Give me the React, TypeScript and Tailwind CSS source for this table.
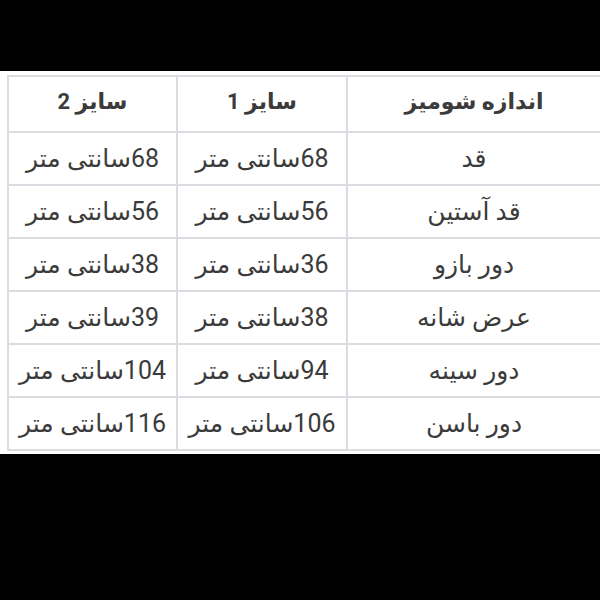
const header = ['اندازه شومیز', 'سایز 1', 'سایز 2'];

const rows = [
  ['قد', '68سانتی متر', '68سانتی متر'],
  ['قد آستین', '56سانتی متر', '56سانتی متر'],
  ['دور بازو', '36سانتی متر', '38سانتی متر'],
  ['عرض شانه', '38سانتی متر', '39سانتی متر'],
  ['دور سینه', '94سانتی متر', '104سانتی متر'],
  ['دور باسن', '106سانتی متر', '116سانتی متر'],
];

export default function App() {
  return (
    <div
      className="w-[600px] h-[600px] bg-black overflow-hidden"
      style={{ fontFamily: "Roboto, 'DejaVu Sans', sans-serif" }}
    >
      <div className="h-[71px]" />
      <div className="bg-white pt-[4px] pb-[3px] pl-[7px]">
        <div dir="rtl" className="grid grid-cols-[254px_170px_169px] border-t-2 border-[#d9dce0] text-[#3b3b3b]">
          {header.map((h) => (
            <div
              key={h}
              className="h-[56px] pb-[5px] flex items-center justify-center border-b-2 border-l-2 border-[#d9dce0] text-[22px] font-bold"
            >
              {h}
            </div>
          ))}
          {rows.map((r) =>
            r.map((c, i) => (
              <div
                key={r[0] + i}
                className="h-[53px] flex items-center justify-center border-b-2 border-l-2 border-[#d9dce0] text-[25px] whitespace-nowrap"
              >
                {c}
              </div>
            ))
          )}
        </div>
      </div>
    </div>
  );
}
